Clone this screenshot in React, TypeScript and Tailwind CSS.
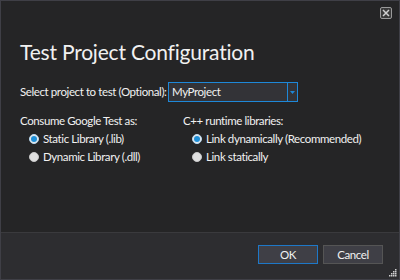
import { useState } from "react";

function Radio({ checked, label, onClick }: { checked: boolean; label: string; onClick: () => void }) {
  return (
    <label className="flex items-center gap-[4px] h-[18px] cursor-pointer whitespace-nowrap" onClick={onClick}>
      <span
        className={
          "w-[10px] h-[10px] rounded-full flex items-center justify-center border shrink-0 " +
          (checked ? "border-[#b8d8f0] bg-[#e8e8e8]" : "border-[#c8c8c8] bg-[#e0e0e0]")
        }
      >
        {checked && <span className="w-[6px] h-[6px] rounded-full bg-[#1e8fd8]" />}
      </span>
      <span>{label}</span>
    </label>
  );
}

export default function App() {
  const [lib, setLib] = useState("static");
  const [runtime, setRuntime] = useState("dynamic");

  return (
    <div
      className="w-[400px] h-[280px] bg-[#252526] border border-[#3f3f46] flex flex-col text-[#f1f1f1] text-[11.5px] tracking-[-0.4px] overflow-hidden"
      style={{ fontFamily: 'Lato, "Noto Sans", sans-serif' }}
    >
      {/* Title bar */}
      <div className="flex justify-end pt-[6px] pr-[7px] h-[20px]">
        <button className="w-[12px] h-[12px] rounded-[2px] border border-[#9a9a9a] bg-[#3a3a3a] flex items-center justify-center">
          <svg width="8" height="8" viewBox="0 0 8 8">
            <path d="M1 1L7 7M7 1L1 7" stroke="#d0d0d0" strokeWidth="1.5" />
          </svg>
        </button>
      </div>

      {/* Body */}
      <div className="flex-1 px-[19px] whitespace-nowrap">
        <h1 className="text-[21px] leading-[28px] mt-[17px] tracking-[-0.2px]">Test Project Configuration</h1>

        <div className="flex items-center mt-[16px]">
          <span className="w-[148px] shrink-0">Select project to test (Optional):</span>
          <div className="w-[130px] h-[20px] border border-[#1e88d8] bg-[#333337] flex">
            <span className="flex-1 pl-[3px] leading-[18px]">MyProject</span>
            <span className="w-[10px] border-l border-[#1e88d8] flex items-center justify-center">
              <svg width="5" height="3" viewBox="0 0 5 3">
                <path d="M0 0H5L2.5 3Z" fill="#1e88d8" />
              </svg>
            </span>
          </div>
        </div>

        <div className="flex mt-[10px]">
          <div className="w-[163px] shrink-0">
            <div className="leading-[18px]">Consume Google Test as:</div>
            <div className="pl-[9px] flex flex-col">
              <Radio checked={lib === "static"} label="Static Library (.lib)" onClick={() => setLib("static")} />
              <Radio checked={lib === "dynamic"} label="Dynamic Library (.dll)" onClick={() => setLib("dynamic")} />
            </div>
          </div>
          <div>
            <div className="leading-[18px]">C++ runtime libraries:</div>
            <div className="pl-[9px] flex flex-col">
              <Radio
                checked={runtime === "dynamic"}
                label="Link dynamically (Recommended)"
                onClick={() => setRuntime("dynamic")}
              />
              <Radio
                checked={runtime === "static"}
                label="Link statically"
                onClick={() => setRuntime("static")}
              />
            </div>
          </div>
        </div>
      </div>

      {/* Footer */}
      <div className="h-[47px] bg-[#2d2d30] border-t border-[#3a3a3d] relative flex justify-end items-start pt-[12px] pr-[16px] gap-[5px]">
        <button className="w-[60px] h-[19px] bg-[#3f3f46] border border-[#1e78c8] leading-[17px]">OK</button>
        <button className="w-[60px] h-[19px] bg-[#3f3f46] border border-[#555555] leading-[17px]">Cancel</button>
        <svg className="absolute right-[2px] bottom-[2px]" width="8" height="8" viewBox="0 0 8 8">
          <g fill="#d0d0d0">
            <rect x="6" y="0" width="1.5" height="1.5" />
            <rect x="4" y="2" width="1.5" height="1.5" />
            <rect x="6" y="2" width="1.5" height="1.5" />
            <rect x="2" y="4" width="1.5" height="1.5" />
            <rect x="4" y="4" width="1.5" height="1.5" />
            <rect x="6" y="4" width="1.5" height="1.5" />
            <rect x="0" y="6" width="1.5" height="1.5" />
            <rect x="2" y="6" width="1.5" height="1.5" />
            <rect x="4" y="6" width="1.5" height="1.5" />
            <rect x="6" y="6" width="1.5" height="1.5" />
          </g>
        </svg>
      </div>
    </div>
  );
}
